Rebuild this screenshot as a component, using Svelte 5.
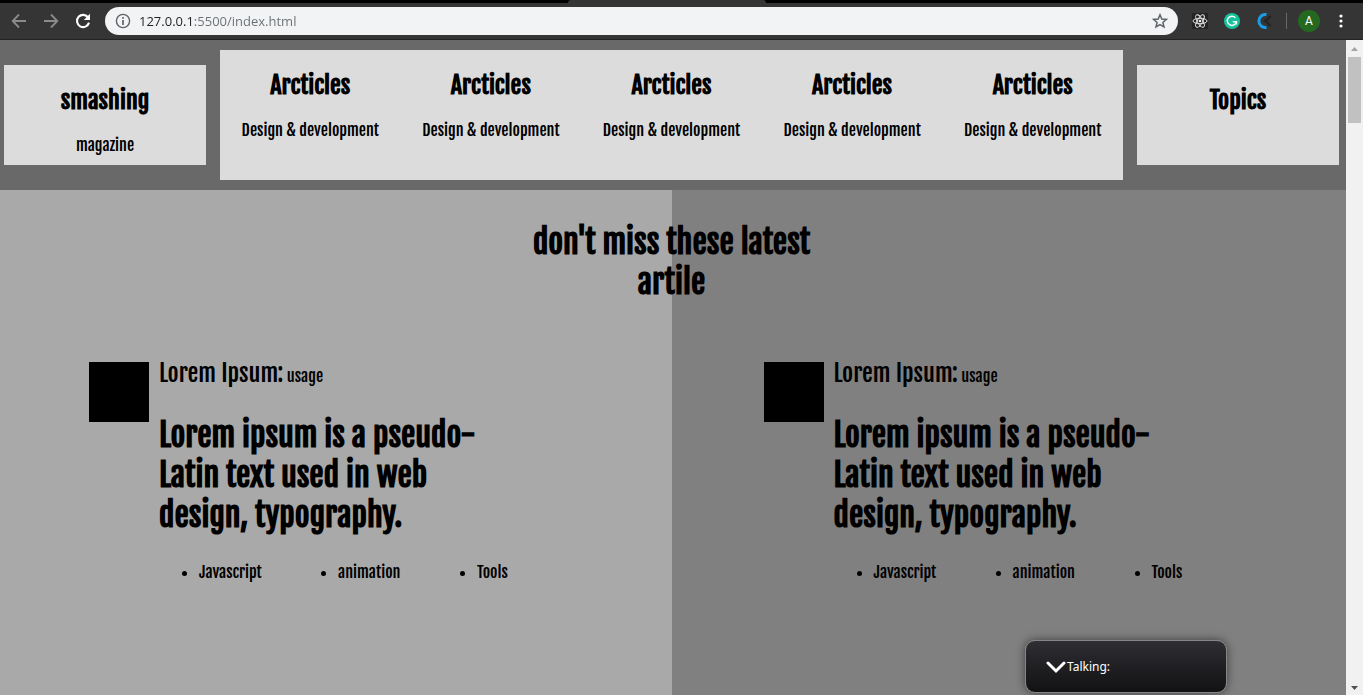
<script>
  const articles = Array.from({ length: 5 }, () => ({ title: 'Arcticles', text: 'Design & development' }));
  const posts = Array.from({ length: 2 }, () => ({
    name: 'Lorem Ipsum:',
    note: 'usage',
    title: 'Lorem ipsum is a pseudo-Latin text used in web design, typography.',
    tags: ['Javascript', 'animation', 'Tools']
  }));
  let address = $state('127.0.0.1:5500/index.html');
</script>

<div class="browser">
  <div class="tabs"><div class="tab"></div></div>
  <div class="toolbar">
    <button aria-label="Back">
      <svg width="16" height="16" viewBox="0 0 16 16" fill="none" stroke="#8b8b8b" stroke-width="1.8"><path d="M15 8H2M8 1.5 1.7 8 8 14.5" /></svg>
    </button>
    <button aria-label="Forward">
      <svg width="16" height="16" viewBox="0 0 16 16" fill="none" stroke="#8b8b8b" stroke-width="1.8"><path d="M1 8h13M8 1.5 14.3 8 8 14.5" /></svg>
    </button>
    <button aria-label="Reload">
      <svg width="16" height="16" viewBox="0 0 16 16"><path d="M13.2 4.6A6.1 6.1 0 1 0 14 9.6" fill="none" stroke="#fff" stroke-width="2.1" /><path d="M15 .8V7H8.8z" fill="#fff" /></svg>
    </button>
    <div class="address">
      <svg width="16" height="16" viewBox="0 0 16 16" fill="none" stroke="#5f6368"><circle cx="8" cy="8" r="6.6" stroke-width="1.4" /><path d="M8 7v5M8 4v1.8" stroke-width="1.7" /></svg>
      <input aria-label="Address" bind:value={address} />
      <button class="star" aria-label="Bookmark">
        <svg width="16" height="16" viewBox="0 0 16 16"><path d="m8 1.8 1.8 4.2 4.6.4-3.5 3 1.1 4.5L8 11.5l-4 2.4 1.1-4.5-3.5-3 4.6-.4z" fill="none" stroke="#5f6368" stroke-width="1.5" /></svg>
      </button>
    </div>
    <div class="extensions">
      <button aria-label="React tools">
        <svg width="16" height="16" viewBox="0 0 16 16" fill="none" stroke="#eee"><rect width="16" height="16" fill="#242424" stroke="none" /><g stroke-width=".9"><ellipse cx="8" cy="8" rx="7" ry="2.7" /><ellipse cx="8" cy="8" rx="7" ry="2.7" transform="rotate(60 8 8)" /><ellipse cx="8" cy="8" rx="7" ry="2.7" transform="rotate(120 8 8)" /></g><circle cx="8" cy="8" r="1.3" fill="#eee" stroke="none" /></svg>
      </button>
      <button aria-label="Grammar">
        <svg width="16" height="16" viewBox="0 0 16 16" fill="none" stroke="#fff" stroke-width="1.4"><circle cx="8" cy="8" r="8" fill="#15c39a" stroke="none" /><path d="M11.4 4.8A4.6 4.6 0 1 0 12.4 8.8H8.8M12.4 8.6v3" /></svg>
      </button>
      <button aria-label="Capture">
        <svg width="16" height="16" viewBox="0 0 16 16" fill="none"><path d="M10.5 1.6A6.5 6.5 0 1 0 10.5 14.4" stroke="#1a9ce6" stroke-width="3" /><path d="m14.5 3-4.500 5 4.500 5" stroke="#242424" stroke-width="2" /><circle cx="9" cy="8" r="1.4" fill="#242424" /></svg>
      </button>
    </div>
    <div class="rule"></div>
    <button class="profile" aria-label="Profile A">A</button>
    <button aria-label="Menu">
      <svg width="16" height="16" viewBox="0 0 16 16" fill="#fff"><circle cx="8" cy="3" r="1.6" /><circle cx="8" cy="8" r="1.6" /><circle cx="8" cy="13" r="1.6" /></svg>
    </button>
  </div>

  <div class="viewport">
    <main>
      <header>
        <div class="box small"><h2>smashing</h2><p>magazine</p></div>
        <nav class="box">
          {#each articles as item}
            <div><h2>{item.title}</h2><p>{item.text}</p></div>
          {/each}
        </nav>
        <div class="box small"><h2>Topics</h2></div>
      </header>
      <section>
        <h1>don't miss these latest artile</h1>
        <div class="posts">
          {#each posts as post}
            <article>
              <div class="picture"></div>
              <div class="copy">
                <p class="by"><span>{post.name}</span> {post.note}</p>
                <h1>{post.title}</h1>
                <ul>
                  {#each post.tags as tag}<li>{tag}</li>{/each}
                </ul>
              </div>
            </article>
          {/each}
        </div>
      </section>
    </main>
    <div class="scrollbar">
      <svg width="17" height="17" viewBox="0 0 17 17" fill="#a3a3a3"><path d="M5 11h7L8.5 7z" /></svg>
      <div class="thumb"></div>
      <svg width="17" height="17" viewBox="0 0 17 17" fill="#505050"><path d="M5 8h7l-3.5 4z" /></svg>
    </div>
  </div>

  <div class="talking">
    <svg width="20" height="14" viewBox="0 0 20 14" fill="none" stroke="#fff" stroke-width="3" stroke-linecap="round"><path d="m2 3 8 8 8-8" /></svg>
    <span>Talking:</span>
  </div>
</div>

<style>
  :global(body) { margin: 0; }
  .browser {
    position: relative;
    display: flex;
    flex-direction: column;
    height: 100vh;
    overflow: hidden;
    color: #000;
    font-family: 'Fjalla One', 'Liberation Sans Narrow', 'Liberation Sans', sans-serif;
    font-size: 16px;
    line-height: 20px;
  }
  button { display: flex; padding: 0; border: 0; background: none; }
  h1, h2, p, ul { margin: 0; }
  .tabs { display: flex; justify-content: center; height: 3px; background: #000; }
  .tab { width: 198px; margin-right: 29px; border-radius: 3px 3px 0 0; background: #353535; }
  .toolbar {
    display: flex;
    align-items: center;
    gap: 16px;
    box-sizing: border-box;
    height: 37px;
    padding: 0 14px 0 11px;
    border-bottom: 1px solid #222;
    background: #353535;
  }
  .address {
    display: flex;
    flex: 1;
    align-items: center;
    gap: 8px;
    height: 28px;
    padding: 0 10px;
    margin-right: -2px;
    margin-left: -2px;
    border-radius: 14px;
    background: #f1f3f4;
  }
  input {
    flex: 1;
    min-width: 0;
    padding: 0;
    border: 0;
    outline: 0;
    background: linear-gradient(90deg, #202124 55px, #6a6e73 55px);
    -webkit-background-clip: text;
    background-clip: text;
    color: #6a6e73;
    -webkit-text-fill-color: transparent;
    font-family: 'Open Sans', sans-serif;
    font-size: 13px;
    line-height: 20px;
  }
  .extensions { display: flex; gap: 16px; }
  .rule { width: 1px; height: 16px; margin: 0 -3px 0 -2px; background: #686868; }
  .profile {
    align-items: center;
    justify-content: center;
    width: 22px;
    height: 22px;
    margin-right: -3px;
    margin-left: -2px;
    border-radius: 50%;
    background: #24691f;
    color: #fff;
    font: 12px/22px Roboto, sans-serif;
  }
  .viewport { display: flex; flex: 1; min-height: 0; }
  main { display: flex; flex: 1; flex-direction: column; min-width: 0; }
  header {
    display: grid;
    grid-template-columns: 202fr 903fr 202fr;
    align-items: center;
    gap: 14px;
    padding: 10px 7px 10px 4px;
    background: #696969;
    text-align: center;
  }
  .box { box-sizing: border-box; min-height: 130px; padding-top: 20px; background: #dcdcdc; }
  .box.small { min-height: 100px; }
  nav { display: grid; grid-template-columns: repeat(5, 1fr); }
  h2 { font-size: 24px; line-height: 30px; }
  .box p { margin-top: 20px; }
  section {
    flex: 1;
    padding: 32px 3px 0 0;
    background: linear-gradient(90deg, #a9a9a9 calc(50% - 1px), #808080 calc(50% - 1px));
  }
  h1 { font-size: 32px; line-height: 40px; }
  section > h1 { max-width: 340px; margin: 0 auto; text-align: center; }
  .posts { display: grid; grid-template-columns: 1fr 1fr; column-gap: 6px; margin-top: 60px; }
  article { display: flex; gap: 10px; padding-left: 89px; }
  .picture { flex: none; width: 60px; height: 60px; background: #000; }
  .copy { max-width: 360px; }
  .by { height: 32px; line-height: 22px; }
  .by span { font-size: 24px; }
  .copy h1 { margin-top: 21px; }
  ul { display: grid; grid-template-columns: repeat(3, 139px); margin-top: 27px; padding-left: 40px; }
  .scrollbar { display: flex; flex-direction: column; width: 17px; background: #f1f1f1; }
  .scrollbar svg:last-child { margin-top: auto; }
  .thumb { height: 66px; margin: 0 2px; background: #c1c1c1; }
  .talking {
    position: absolute;
    right: 136px;
    bottom: 2px;
    display: flex;
    align-items: center;
    gap: 1px;
    box-sizing: border-box;
    width: 202px;
    height: 53px;
    padding-left: 20px;
    border: 1px solid #858585;
    border-radius: 10px;
    background: linear-gradient(#2e2e33, #121214);
    box-shadow: 0 0 10px #0008;
    color: #fff;
    font-family: 'Noto Sans', sans-serif;
    font-size: 12px;
  }
</style>
